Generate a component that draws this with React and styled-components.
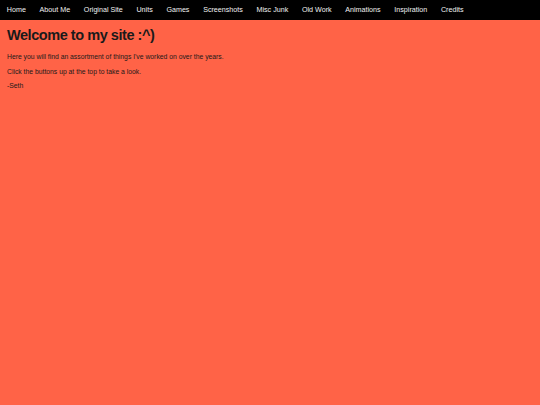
import React from 'react'
import styled, { createGlobalStyle } from 'styled-components'

const NAV_ITEMS = [
  'Home',
  'About Me',
  'Original Site',
  'Units',
  'Games',
  'Screenshots',
  'Misc Junk',
  'Old Work',
  'Animations',
  'Inspiration',
  'Credits',
]

const GlobalStyle = createGlobalStyle`
  html, body {
    margin: 0;
    padding: 0;
    background: #ff6347;
    font-family: "Liberation Sans", Arial, sans-serif;
  }
`

export default function App() {
  return (
    <>
      <GlobalStyle />
      <TopNav>
        {NAV_ITEMS.map((item) => (
          <NavLink key={item} href="#">
            {item}
          </NavLink>
        ))}
      </TopNav>
      <Content>
        <Title>Welcome to my site :^)</Title>
        <Text>Here you will find an assortment of things I've worked on over the years.</Text>
        <Text>Click the buttons up at the top to take a look.</Text>
        <Text>-Seth</Text>
      </Content>
    </>
  )
}

const TopNav = styled.nav`
  display: flex;
  align-items: center;
  height: 20px;
  background: #000;
  overflow: hidden;
`

const NavLink = styled.a`
  padding: 0 6.85px;
  color: #f2f2f2;
  font-size: 7.15px;
  line-height: 20px;
  text-decoration: none;
`

const Content = styled.main`
  padding: 0 7px;
`

const Title = styled.h1`
  margin: 7px 0 10px;
  font-size: 14.5px;
  line-height: 16px;
  letter-spacing: -0.45px;
  font-weight: bold;
  color: #1a1a1a;
`

const Text = styled.p`
  margin: 0 0 6px;
  font-size: 6.8px;
  line-height: 8.5px;
  color: #1a1a1a;
`
